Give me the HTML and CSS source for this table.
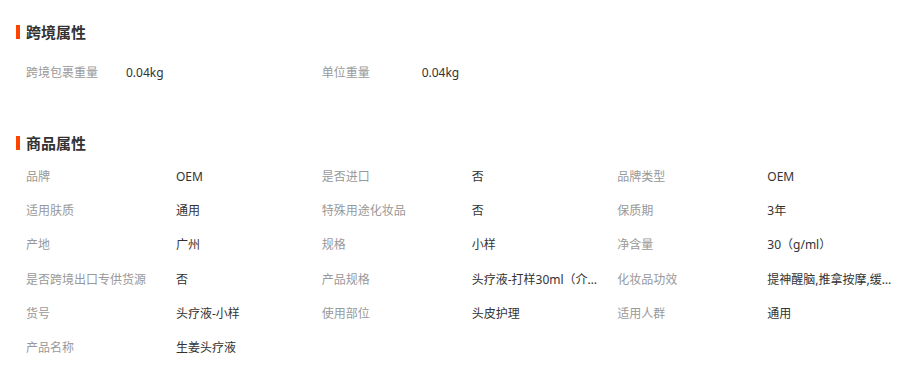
FILE: index.html
```html
<!DOCTYPE html>
<html lang="zh-CN">
<head>
<meta charset="utf-8">
<link rel="stylesheet" href="styles.css">
</head>
<body>
<section class="sec sec-cross">
  <h3 class="sec-title">跨境属性</h3>
  <div class="attr-grid cross">
    <div class="attr"><span class="label">跨境包裹重量</span><span class="value">0.04kg</span></div>
    <div class="attr"><span class="label">单位重量</span><span class="value">0.04kg</span></div>
  </div>
</section>
<section class="sec sec-goods">
  <h3 class="sec-title">商品属性</h3>
  <div class="attr-grid goods">
    <div class="attr"><span class="label">品牌</span><span class="value">OEM</span></div>
    <div class="attr"><span class="label">是否进口</span><span class="value">否</span></div>
    <div class="attr"><span class="label">品牌类型</span><span class="value">OEM</span></div>
    <div class="attr"><span class="label">适用肤质</span><span class="value">通用</span></div>
    <div class="attr"><span class="label">特殊用途化妆品</span><span class="value">否</span></div>
    <div class="attr"><span class="label">保质期</span><span class="value">3年</span></div>
    <div class="attr"><span class="label">产地</span><span class="value">广州</span></div>
    <div class="attr"><span class="label">规格</span><span class="value">小样</span></div>
    <div class="attr"><span class="label">净含量</span><span class="value">30（g/ml）</span></div>
    <div class="attr"><span class="label">是否跨境出口专供货源</span><span class="value">否</span></div>
    <div class="attr"><span class="label">产品规格</span><span class="value">头疗液-打样30ml（介绍说明）</span></div>
    <div class="attr"><span class="label">化妆品功效</span><span class="value">提神醒脑,推拿按摩,缓解疲劳</span></div>
    <div class="attr"><span class="label">货号</span><span class="value">头疗液-小样</span></div>
    <div class="attr"><span class="label">使用部位</span><span class="value">头皮护理</span></div>
    <div class="attr"><span class="label">适用人群</span><span class="value">通用</span></div>
    <div class="attr"><span class="label">产品名称</span><span class="value">生姜头疗液</span></div>
  </div>
</section>
</body>
</html>
```

FILE: styles.css
```css
html, body {
  margin: 0;
  padding: 0;
  background: #fff;
}
body {
  font-family: "Noto Sans", "Noto Sans CJK SC", sans-serif;
  font-size: 12px;
  color: #333;
}
.sec {
  padding-left: 16px;
}
.sec-cross {
  padding-top: 22px;
}
.sec-goods {
  padding-top: 44px;
}
.sec-title {
  margin: 0;
  height: 20px;
  line-height: 20px;
  font-size: 15px;
  font-weight: bold;
  color: #333;
  display: flex;
  align-items: center;
  gap: 6px;
}
.sec-title::before {
  content: "";
  width: 4px;
  height: 14px;
  background: #ff4400;
}
.attr-grid {
  display: grid;
  grid-template-columns: repeat(3, 295.67px);
  padding-left: 10px;
}
.cross {
  margin-top: 13px;
  grid-auto-rows: 34px;
}
.goods {
  margin-top: 6px;
  grid-auto-rows: 34.2px;
}
.attr {
  display: flex;
  align-items: center;
  white-space: nowrap;
}
.label {
  color: #999;
  flex: 0 0 150px;
}
.cross .label {
  flex-basis: 100px;
}
.value {
  color: #333;
  width: 128px;
  overflow: hidden;
  text-overflow: ellipsis;
}
```
